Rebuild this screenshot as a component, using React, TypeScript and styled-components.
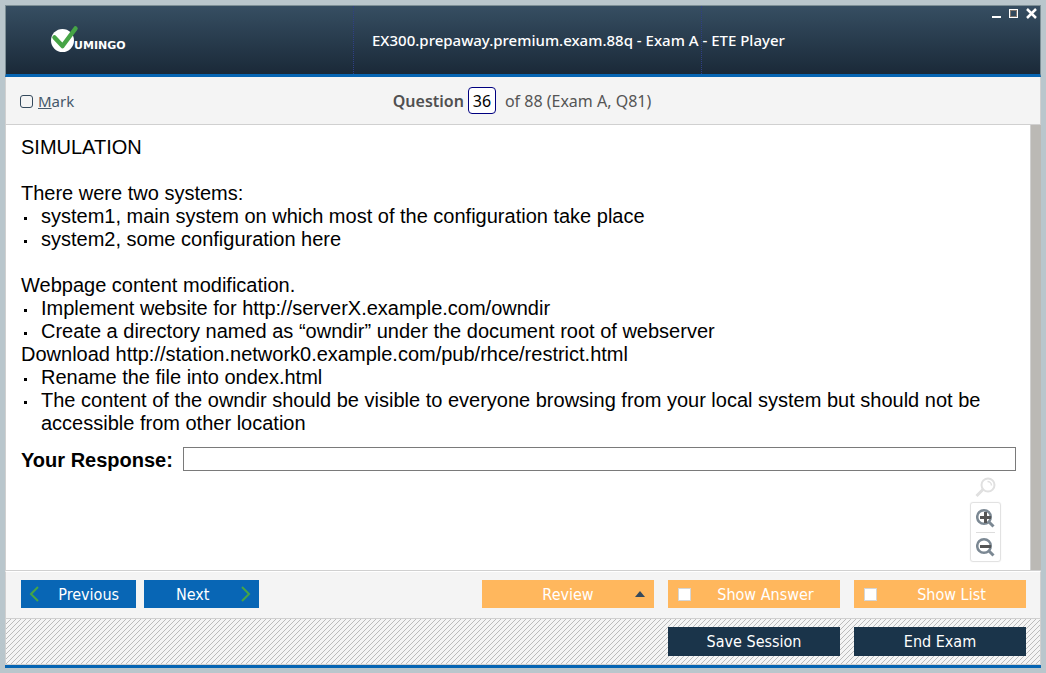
import React, { useState } from "react";
import styled, { createGlobalStyle, css } from "styled-components";

const ui = `"Noto Sans", "Open Sans", sans-serif`;
const tahoma = `"DejaVu Sans Condensed", "Noto Sans", sans-serif`;

const GlobalStyle = createGlobalStyle`
  *, *::before, *::after { box-sizing: border-box; }
  body { margin: 0; background: #b9c6cc; }
  button, input { font: inherit; margin: 0; }
`;

const Desktop = styled.div`
  min-height: 100vh;
  padding: 5px;
  display: flex;
  background: #b9c6cc;
`;

const Window = styled.main`
  flex: 1;
  min-width: 0;
  display: flex;
  flex-direction: column;
  border-bottom: 3px solid #0665b3;
`;

const Header = styled.header`
  position: relative;
  display: grid;
  grid-template-columns: repeat(2, minmax(0, 348fr)) minmax(0, 338fr);
  align-items: center;
  height: 72px;
  border: 1px solid #7d8f96;
  border-bottom: 3px solid #0665b3;
  background: linear-gradient(#364e62, #1a2938);
`;

const LogoCell = styled.div`
  align-self: stretch;
  display: flex;
  align-items: center;
  padding-left: 44px;
  border-right: 1px dotted #2f3f86;
`;

const TitleCell = styled.div`
  align-self: stretch;
  display: flex;
  align-items: center;
  padding-left: 18px;
  border-right: 1px dotted #2f3f86;
`;

const Title = styled.h1`
  margin: 0;
  flex: none;
  font: 500 15px/20px ${ui};
  color: #fff;
  white-space: nowrap;
`;

const WindowControls = styled.div`
  position: absolute;
  top: 1px;
  right: 0;
  display: flex;
  gap: 2px;
`;

const ControlButton = styled.button`
  display: block;
  width: 15px;
  height: 14px;
  padding: 0;
  border: 0;
  background: none;
`;

const panelSides = css`
  border-left: 1px solid #d0d0d0;
  border-right: 1px solid #d0d0d0;
`;

const QuestionBar = styled.div`
  ${panelSides}
  display: grid;
  grid-template-columns: 1fr auto 1fr;
  align-items: center;
  height: 48px;
  padding: 0 16px 0 14px;
  border-bottom: 1px solid #d0d0d0;
  background: #f4f4f4;
  color: #555;
  font: 16px/22px ${ui};
`;

const MarkLabel = styled.label`
  display: flex;
  align-items: center;
  gap: 5px;
  padding-top: 1px;
  color: #44586a;
  font-size: 15px;
`;

const MarkBox = styled.input`
  appearance: none;
  width: 13px;
  height: 13px;
  border: 1px solid #34495c;
  border-radius: 3px;
  background: transparent;
  &:checked { background: #34495c; }
`;

const QuestionPosition = styled.div`
  display: flex;
  align-items: center;
  gap: 4px;
`;

const QuestionLabel = styled.label`
  font-weight: 600;
  color: #505050;
`;

const QuestionInput = styled.input`
  width: 28px;
  height: 27px;
  padding: 0;
  border: 1px solid #000080;
  border-radius: 4px;
  background: #fff;
  color: #000;
  text-align: center;
`;

const QuestionTotal = styled.span`
  margin-left: 5px;
`;

const ContentPanel = styled.section`
  flex: 1;
  display: flex;
  min-height: 0;
  border-left: 1px solid #d0d0d0;
  background: #fff;
  border-bottom: 1px solid #d0d0d0;
`;

const Scrollbar = styled.div`
  width: 11px;
  background: #bbb9b5;
  border-left: 1px solid #d0d0d0;
`;

const Content = styled.div`
  flex: 1;
  display: flex;
  flex-direction: column;
  padding: 11px 14px 8px 15px;
  font: 20px/23px "Liberation Sans", Arial, sans-serif;
  color: #000;
`;

const Paragraph = styled.p<{ $spaced?: boolean }>`
  margin: 0 0 ${(p) => (p.$spaced ? "23px" : "0")};
`;

const BulletList = styled.ul<{ $spaced?: boolean }>`
  list-style: none;
  margin: 0 0 ${(p) => (p.$spaced ? "23px" : "0")};
  padding: 0;
`;

const Bullet = styled.li`
  display: flex;
  padding-right: 20px;
  &::before {
    content: "";
    flex: none;
    width: 3px;
    height: 3px;
    margin: 12px 14px 0 3px;
    background: #000;
  }
`;

const ResponseRow = styled.label`
  display: flex;
  align-items: flex-start;
  gap: 10px;
  margin-top: 12px;
  font-weight: 700;
  line-height: 27px;
`;

const ResponseInput = styled.input`
  flex: 1;
  min-width: 0;
  height: 24px;
  padding: 0 4px;
  border: 1px solid #7a7a7a;
  background: #fff;
`;

const ZoomTools = styled.div`
  align-self: flex-end;
  display: flex;
  flex-direction: column;
  align-items: center;
  gap: 4px;
  margin: 3px 15px 0 0;
`;

const ZoomGroup = styled.div`
  display: flex;
  flex-direction: column;
  align-items: center;
  width: 31px;
  border: 1px solid #e2e2e2;
  border-radius: 3px;
  box-shadow: 0 0 1px #ddd;
`;

const ZoomButton = styled.button`
  display: flex;
  align-items: center;
  justify-content: center;
  width: 19px;
  height: 29px;
  padding: 0;
  border: 0;
  background: none;
  & + & { border-top: 1px solid #ddd; }
`;

const PlainIconButton = styled.button`
  display: block;
  width: 21px;
  height: 21px;
  padding: 0;
  border: 0;
  background: none;
`;

const ActionBar = styled.div`
  ${panelSides}
  display: flex;
  align-items: center;
  gap: 14px;
  height: 48px;
  padding: 0 14px 2px 15px;
  border-top: 1px solid #fff;
  border-bottom: 1px solid #d0d0d0;
  background: #f4f4f4;
`;

const NavGroup = styled.nav`
  display: flex;
  gap: 8px;
  margin-right: auto;
`;

const buttonBase = css`
  display: flex;
  align-items: center;
  height: 28px;
  padding-top: 2px;
  border: 0;
  color: #fff;
  font: 16px/20px ${tahoma};
`;

const NavButton = styled.button`
  ${buttonBase}
  justify-content: space-between;
  width: 115px;
  padding: 0 8px;
  background: #0866b5;
`;

const NavText = styled.span<{ $side: "left" | "right" }>`
  flex: 1;
  text-align: ${(p) => p.$side};
  padding: ${(p) => (p.$side === "right" ? "2px 9px 0 0" : "2px 0 0 24px")};
`;

const OptionButton = styled.button`
  ${buttonBase}
  width: 172px;
  padding: 0 9px;
  background: #ffb75d;
`;

const OptionLabel = styled.label`
  ${buttonBase}
  width: 172px;
  padding: 0 10px;
  background: #ffb75d;
`;

const OptionText = styled.span`
  flex: 1;
  text-align: center;
  padding: 2px 0 0 10px;
`;

const OptionBox = styled.input`
  appearance: none;
  flex: none;
  width: 13px;
  height: 13px;
  border: 1px solid #d5d5d5;
  background: #fff;
  &:checked { background: #1a344a; }
`;

const SessionBar = styled.footer`
  ${panelSides}
  display: flex;
  justify-content: flex-end;
  align-items: center;
  gap: 14px;
  height: 46px;
  padding: 0 14px 1px;
  border-bottom: 1px solid #d0d0d0;
  background: #f5f5f5 linear-gradient(135deg, transparent 43%, #bcbcbc 43% 57%, transparent 57%) 0 0 / 5px 5px;
`;

const SessionButton = styled.button`
  ${buttonBase}
  justify-content: center;
  width: 172px;
  height: 29px;
  background: #1a344a;
`;

function Logo() {
  return (
    <svg width="82" height="30" viewBox="0 0 82 30" role="img" aria-label="Vumingo">
      <circle cx="12.500" cy="15.500" r="11.500" fill="#fff" />
      <path d="M4.500 12.500 L12.500 21 L25.500 3.500" fill="none" stroke="#46a446" strokeWidth="4.500" strokeLinecap="round" strokeLinejoin="round" />
      <text x="24" y="24" fill="#fff" fontFamily="DejaVu Sans, sans-serif" fontWeight="700" fontSize="11">UMINGO</text>
    </svg>
  );
}

function Magnifier({ sign }: { sign: "plus" | "minus" }) {
  return (
    <svg width="19" height="20" viewBox="0 0 19 20" fill="none">
      <circle cx="8" cy="9" r="6.800" stroke="#7b8893" strokeWidth="2.500" />
      <path d="M12.500 13.500 L17.500 18.500" stroke="#7b8893" strokeWidth="3" />
      <path d={sign === "plus" ? "M4 9.500h11M9.500 4v11" : "M4 9.500h11"} stroke="#555" strokeWidth="3" />
    </svg>
  );
}

function ResetMagnifier() {
  return (
    <svg width="21" height="21" viewBox="0 0 21 21" fill="none" stroke="#e0e0e0">
      <circle cx="13" cy="8" r="6.500" strokeWidth="2" />
      <path d="M12.500 4.500a4 4 0 0 1 4 4" strokeWidth="1.500" />
      <path d="M8 12.500 L1.500 19" strokeWidth="3" />
    </svg>
  );
}

function Chevron({ direction }: { direction: "left" | "right" }) {
  return (
    <svg width="10" height="16" viewBox="0 0 10 16" fill="none" stroke="#46a546" strokeWidth="2">
      <path d={direction === "left" ? "M9 1 L2 8 L9 15" : "M1 1 L8 8 L1 15"} />
    </svg>
  );
}

export default function App() {
  const [question, setQuestion] = useState("36");
  return (
    <>
      <GlobalStyle />
      <Desktop>
        <Window>
          <Header>
            <LogoCell><Logo /></LogoCell>
            <TitleCell>
              <Title>EX300.prepaway.premium.exam.88q - Exam A - ETE Player</Title>
            </TitleCell>
            <WindowControls>
              <ControlButton aria-label="Minimize">
                <svg width="15" height="14"><path d="M1 10h9" stroke="#fff" strokeWidth="2" /></svg>
              </ControlButton>
              <ControlButton aria-label="Maximize">
                <svg width="15" height="14">
                  <rect x="1.500" y="2.500" width="8" height="8" fill="none" stroke="#fff" />
                  <rect x="2.500" y="3.500" width="6" height="6" fill="none" stroke="#83786f" />
                </svg>
              </ControlButton>
              <ControlButton aria-label="Close">
                <svg width="15" height="14"><path d="M2 2 L11 11 M11 2 L2 11" stroke="#fff" strokeWidth="2.500" /></svg>
              </ControlButton>
            </WindowControls>
          </Header>

          <QuestionBar>
            <MarkLabel>
              <MarkBox type="checkbox" />
              <span><u>M</u>ark</span>
            </MarkLabel>
            <QuestionPosition>
              <QuestionLabel htmlFor="question-number">Question</QuestionLabel>
              <QuestionInput id="question-number" value={question} onChange={(e) => setQuestion(e.target.value)} />
              <QuestionTotal>of 88 (Exam A, Q81)</QuestionTotal>
            </QuestionPosition>
          </QuestionBar>

          <ContentPanel>
            <Content>
              <Paragraph $spaced>SIMULATION</Paragraph>
              <Paragraph>There were two systems:</Paragraph>
              <BulletList $spaced>
                <Bullet>system1, main system on which most of the configuration take place</Bullet>
                <Bullet>system2, some configuration here</Bullet>
              </BulletList>
              <Paragraph>Webpage content modification.</Paragraph>
              <BulletList>
                <Bullet>Implement website for http://serverX.example.com/owndir</Bullet>
                <Bullet>Create a directory named as “owndir” under the document root of webserver</Bullet>
              </BulletList>
              <Paragraph>Download http://station.network0.example.com/pub/rhce/restrict.html</Paragraph>
              <BulletList>
                <Bullet>Rename the file into ondex.html</Bullet>
                <Bullet>The content of the owndir should be visible to everyone browsing from your local system but should not be accessible from other location</Bullet>
              </BulletList>
              <ResponseRow>
                Your Response:
                <ResponseInput type="text" />
              </ResponseRow>
              <ZoomTools>
                <PlainIconButton aria-label="Reset zoom"><ResetMagnifier /></PlainIconButton>
                <ZoomGroup>
                  <ZoomButton aria-label="Zoom in"><Magnifier sign="plus" /></ZoomButton>
                  <ZoomButton aria-label="Zoom out"><Magnifier sign="minus" /></ZoomButton>
                </ZoomGroup>
              </ZoomTools>
            </Content>
            <Scrollbar />
          </ContentPanel>

          <ActionBar>
            <NavGroup>
              <NavButton>
                <Chevron direction="left" />
                <NavText $side="right">Previous</NavText>
              </NavButton>
              <NavButton>
                <NavText $side="left">Next</NavText>
                <Chevron direction="right" />
              </NavButton>
            </NavGroup>
            <OptionButton>
              <OptionText>Review</OptionText>
              <svg width="10" height="6"><path d="M0 6 L5 0 L10 6z" fill="#34495c" /></svg>
            </OptionButton>
            <OptionLabel>
              <OptionBox type="checkbox" />
              <OptionText>Show Answer</OptionText>
            </OptionLabel>
            <OptionLabel>
              <OptionBox type="checkbox" />
              <OptionText>Show List</OptionText>
            </OptionLabel>
          </ActionBar>

          <SessionBar>
            <SessionButton>Save Session</SessionButton>
            <SessionButton>End Exam</SessionButton>
          </SessionBar>
        </Window>
      </Desktop>
    </>
  );
}
